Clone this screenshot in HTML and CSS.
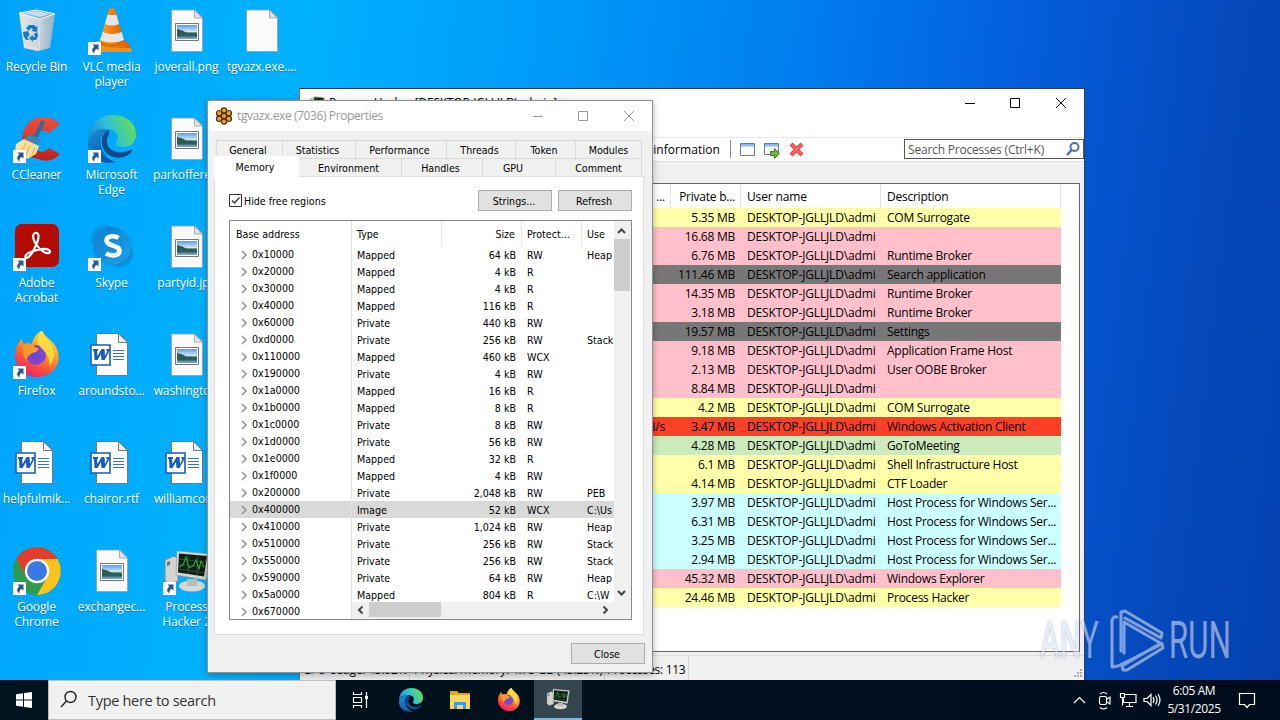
FILE: index.html
```html
<!DOCTYPE html>
<html lang="en">
<head>
<meta charset="utf-8">
<title>Desktop</title>
<link rel="stylesheet" href="styles.css">
</head>
<body>
<svg class="defs" width="0" height="0" aria-hidden="true">
  <defs>
    <linearGradient id="gBin" x1="0" x2="1"><stop offset="0" stop-color="#dfe8ee"/><stop offset=".55" stop-color="#c9d4db"/><stop offset="1" stop-color="#8fb0c6"/></linearGradient>
    <linearGradient id="gCone" x1="0" x2="1"><stop offset="0" stop-color="#ffa21f"/><stop offset=".5" stop-color="#f57f0c"/><stop offset="1" stop-color="#d65a00"/></linearGradient>
    <linearGradient id="gEdgeA" x1="0" y1=".6" x2="1" y2=".3"><stop offset="0" stop-color="#1b8fd8"/><stop offset=".45" stop-color="#2fc0d8"/><stop offset="1" stop-color="#68e04c"/></linearGradient>
    <linearGradient id="gEdgeB" x1="0" y1="0" x2=".6" y2="1"><stop offset="0" stop-color="#1a8fd9"/><stop offset="1" stop-color="#0c58a8"/></linearGradient>
    <linearGradient id="gSky" x1="0" y1="0" x2="0" y2="1"><stop offset="0" stop-color="#5b9bea"/><stop offset=".5" stop-color="#d8ecf8"/><stop offset=".55" stop-color="#3e7257"/><stop offset=".75" stop-color="#2c5c6e"/><stop offset="1" stop-color="#8cb6d6"/></linearGradient>
    <linearGradient id="gFox" x1=".8" y1="0" x2=".3" y2="1"><stop offset="0" stop-color="#fff04a"/><stop offset=".4" stop-color="#ffa226"/><stop offset=".7" stop-color="#ff5438"/><stop offset="1" stop-color="#e91e6e"/></linearGradient>
    <radialGradient id="gFoxIn"><stop offset="0" stop-color="#5b4bd8"/><stop offset="1" stop-color="#9040c8"/></radialGradient>
    <linearGradient id="gSkype" x1="0" y1="0" x2="1" y2="1"><stop offset="0" stop-color="#0f7fd0"/><stop offset=".5" stop-color="#1490dc"/><stop offset="1" stop-color="#18a4e8"/></linearGradient>
    <linearGradient id="gRed" x1="0" y1="0" x2="0" y2="1"><stop offset="0" stop-color="#f0503c"/><stop offset="1" stop-color="#c02018"/></linearGradient>
  </defs>
  <symbol id="shortcut" viewBox="0 0 13 13"><path fill="#fff" d="M0 0h13v13H0z"/><path fill="#2a5599" d="M4.500 2.500h6v6L8.500 6.700C7 8 6.200 9.300 6.300 11.300 3.200 9.500 3.800 6.500 6.300 4.500z"/></symbol>
  <symbol id="bin" viewBox="0 0 48 48"><path fill="url(#gBin)" d="M6 6l18-3 18 4-5 34-12 3-14-3z"/><path fill="#7eabcd" d="M6 6l18-3 18 4-15 5z"/><path fill="#c6dded" d="M10 6l14-2 13 3-10 3z"/><path fill="none" stroke="#f8fbfd" d="M6 6l21 6 15-5M6 6l18-3 18 4"/><path fill="none" stroke="#e6eef3" stroke-width=".6" d="M27 12l-1 31"/><path fill="#e8dfd8" opacity=".8" d="M11 37l14 4v3l-14-3z"/><path fill="#1a76c6" d="M13 21l3-3h5l2 2 1.500-1-.5 6-5.500-1 1.500-1.500-2-1.500-2.500 3zM10 25l5-1 2 5-1.500-.5-1 2.500 1.500 2h-3l-2.500-4zM21 27l3-2 1 4-2 4h-3v2l-4-4 4-3v2h2z"/></symbol>
  <symbol id="vlc" viewBox="0 0 48 48"><path fill="url(#gCone)" d="M9 34h30l5 10H4z"/><path fill="#f09018" d="M4 45h40l-1-4H5z"/><path fill="#d96b05" d="M12 37q12 6 24 0l-2-8H14z"/><path fill="url(#gCone)" d="M21 2q3-2 6 0l9 32q-12 7-24 0z"/><path fill="#e4e7ea" d="M19.500 8h9l2.500 9q-7 3-14 0zM14.600 25q9.500 4 19 0l2.400 8q-12 5-24 0z"/></symbol>
  <symbol id="cc" viewBox="0 0 48 48"><path fill="url(#gRed)" d="M47 9L36 18q-7-6-13 1-6 8 0 15 6 6 13-1l11 6Q38 49 25 44 9 41 9 24 11 5 27 2q13-1 20 7z"/><path stroke="#2c6ca4" stroke-width="4" d="M30 6L23 22"/><path fill="#3a86ba" d="M16 19l12 6-3 5-13-6z"/><path fill="#ffdf9c" d="M11 24l15 7-3 8-9 5-3-4-9-4 1-7z"/><path fill="none" stroke="#dba958" d="M13 28l-5 8M17 30l-4 10M22 32l-3 8"/></symbol>
  <symbol id="edge" viewBox="0 0 48 48"><path fill="url(#gEdgeA)" d="M0 23C1 8 12 0 25 0c14 0 23 9 23 19 0 9-6 13-13 13-6 0-8-2-7-4 5-7-1-15-10-14C8 13 2 19 0 23z"/><path fill="url(#gEdgeB)" d="M0 25c3-9 12-13 20-10-6 2-9 8-7 16 2 9 7 14 15 16C10 51-2 38 0 25z"/><path fill="#114a8b" d="M20 15c-9 5-8 19 1 25 8 5 18 3 23-4 1-1 0-2-1-1-13 6-26 0-24-11 1-4 4-6 1-9z"/></symbol>
  <symbol id="page" viewBox="0 0 48 48"><path fill="#fafafa" stroke="#9a9a9a" stroke-width=".8" d="M8.500 3h23l8 8v33.500h-31z"/><path fill="#e3e3e3" stroke="#9a9a9a" stroke-width=".8" d="M31.500 3v8h8z"/></symbol>
  <symbol id="image" viewBox="0 0 48 48"><use href="#page"/><path fill="#fff" stroke="#777" d="M12.500 16.500h23v17h-23z"/><path fill="url(#gSky)" d="M14 18h20v14H14z"/><path fill="#2d5b50" d="M14 22q6 1 10 4l10 1v1H14z"/></symbol>
  <symbol id="word" viewBox="0 0 48 48"><path fill="#fff" stroke="#777" d="M8.500 2.500h22l9 9v33h-31z"/><path fill="#eee" stroke="#777" d="M30.500 2.500v9h9z"/><path fill="#fff" stroke="#185abd" stroke-width="1.600" d="M3 14h19v20H3z"/><path fill="#185abd" d="M5 18h5v2H9l.5 5 4-7h3l.5 7 2.500-5h-1v-2h3v2l-5 9h-3l-.500-6-3.500 6h-3L6 20H5z"/><path stroke="#3e70b5" stroke-width="1.200" d="M25 19.500h11M25 22.500h11M25 25.500h11M25 28.500h11"/></symbol>
  <symbol id="acro" viewBox="0 0 48 48"><rect x="2" y="1" width="44" height="43" rx="7" fill="#b30b00"/><path fill="none" stroke="#fff" stroke-width="2.200" d="M22 10c4-1 5 4 1 12-3 7-6 12-9 13-3 0-2-4 4-6 7-3 15-4 18-2 3 3-1 4-5 2-5-3-10-9-11-15 0-2 1-4 2-4z"/></symbol>
  <symbol id="skype" viewBox="0 0 48 48"><circle cx="17" cy="16" r="14" fill="#0795e2"/><circle cx="31" cy="30" r="14" fill="#0b8ee0"/><circle cx="24" cy="23" r="19" fill="url(#gSkype)"/><path fill="none" stroke="#fff" stroke-width="4.600" d="M30.500 15c-5-3-12-2-12 2.500 0 6 13 4 13 10.500 0 5-8 5.500-13.500 2.500"/></symbol>
  <symbol id="firefox" viewBox="0 0 48 48"><path fill="url(#gFox)" d="M2 24C2 15 6 12 8 8l3 5c3-1 5-1 8 0 1-7 6-11 10-14 2 7 12 11 15 19 6 16-6 28-20 28C11 46 2 36 2 24z"/><circle cx="23" cy="24" r="10" fill="url(#gFoxIn)"/><path fill="#ff9a28" d="M11 13q6-2 11 3l4 2-3 3c-6 1-7 3-10 8-4-6-4-12-2-16z"/><path fill="#ffe447" opacity=".8" d="M29 0c1 9 11 10 12 23 0 6-3 10-5 12 2-11-7-16-11-22-1-5 1-9 4-13z"/></symbol>
  <symbol id="chrome" viewBox="0 0 48 48"><circle cx="24" cy="24" r="24" fill="#2f9b4c"/><path fill="#e33b2e" d="M3.500 11.500A24 24 0 0 1 44.500 12H24L13.600 30z"/><path fill="#fcc31e" d="M44.500 12A24 24 0 0 1 24 48l10.400-18L24 12z"/><circle cx="24" cy="24" r="12.200" fill="#fff"/><circle cx="24" cy="24" r="10" fill="#3a78e7"/></symbol>
  <symbol id="hacker" viewBox="0 0 48 48"><path fill="#d3d3cf" stroke="#888" d="M2 13l9-4 4 3v22l-8 3-5-3z"/><path fill="#777" d="M4 15l3-1v4l-3 1z"/><ellipse cx="29" cy="39" rx="13" ry="5.500" fill="#d8d8d3"/><path fill="#bcbcb6" d="M24 32h10v7H24z"/><path fill="#d8d8d2" stroke="#999" stroke-width=".6" d="M14 4l33 3-4 26-30-5z"/><path fill="#101e13" d="M16 6.500l28 2.500-3 20.500-26-4z"/><path fill="none" stroke="#315d38" stroke-width=".8" d="M16 12l27 3M16 17l26 3M16 22l26 4M25 7v20M35 8l-1 20"/><path fill="none" stroke="#2aa83a" stroke-width="1.100" d="M16 20l4-2 3-8 3 11 4-2 3-6 3 9 2-8 3 6"/></symbol>
  <symbol id="flower" viewBox="0 0 18 18"><g fill="#eda41c" stroke="#4a300a" stroke-width="1.200"><circle cx="9" cy="3.500" r="2.700"/><circle cx="13.800" cy="6.200" r="2.700"/><circle cx="13.800" cy="11.800" r="2.700"/><circle cx="9" cy="14.500" r="2.700"/><circle cx="4.200" cy="11.800" r="2.700"/><circle cx="4.200" cy="6.200" r="2.700"/><circle cx="9" cy="9" r="2.600"/></g></symbol>
</svg>

<main class="desktop">
  <div class="icons" id="icons"></div>

  <section class="window hacker">
    <header class="titlebar">
      <svg class="app-icon" width="16" height="16"><use href="#hacker"/></svg>
      <span class="title">Process Hacker [DESKTOP-JGLLJLD\admin]+</span>
      <svg class="controls" width="106" height="14" fill="none" stroke="#000"><path d="M1 7.500h10M46.500 2.500h9v9h-9zM92 2l10 10M102 2L92 12"/></svg>
    </header>
    <div class="menu"></div>
    <div class="toolbar">
      <span class="tool-label">System information</span>
      <svg class="tools" width="76" height="20" fill="none"><path stroke="#888" d="M.5 1v18"/><path fill="#fff" stroke="#557eb9" d="M10.500 4.500h14v12h-14z"/><path fill="#8db9ee" d="M11 5h13v2.500H11z"/><path fill="#fff" stroke="#557eb9" d="M34.500 4.500h14v11h-14z"/><path fill="#8db9ee" d="M35 5h13v2.500H35z"/><path fill="#70b53c" stroke="#3e7d1c" d="M40.500 12.500h4v-3l5 5-5 5v-3h-4z"/><path stroke="#d8393f" stroke-width="4" d="M61 5l11 11M72 5L61 16"/><path stroke="#f46b6d" stroke-width="2" d="M61.500 5.500l10 10M71.500 5.500l-10 10"/></svg>
      <div class="search"><span>Search Processes (Ctrl+K)</span>
        <svg width="14" height="14" fill="none" stroke="#4a72b8"><circle cx="8.500" cy="5" r="4" stroke-width="2"/><path stroke-width="2.500" d="M5.500 8L1 13"/></svg></div>
    </div>
    <div class="band"></div>
    <div class="proc-list">
      <div class="proc proc-head"><span>...</span><span>Private b...</span><span>User name</span><span>Description</span></div>
      <div id="procs"></div>
    </div>
    <footer class="status"><span>CPU Usage: 43.92%</span><span>Physical memory: 4.75 GB (43.23%)</span><span>Processes: 113</span>
      <svg width="10" height="10" fill="#aaa"><path d="M7 1h2v2H7zM4 4h2v2H4zM7 4h2v2H7zM1 7h2v2H1zM4 7h2v2H4zM7 7h2v2H7z"/></svg></footer>
  </section>

  <section class="window props">
    <header class="props-title">
      <svg width="18" height="18"><use href="#flower"/></svg>
      <span>tgvazx.exe (7036) Properties</span>
      <svg class="controls" width="106" height="14" fill="none" stroke="#999"><path d="M1 7.500h10M46.500 2.500h9v9h-9zM92 2l10 10M102 2L92 12"/></svg>
    </header>
    <nav class="tabs tabs-back"><span>General</span><span>Statistics</span><span>Performance</span><span>Threads</span><span>Token</span><span>Modules</span></nav>
    <nav class="tabs tabs-front"><span class="active">Memory</span><span>Environment</span><span>Handles</span><span>GPU</span><span>Comment</span></nav>
    <div class="panel">
      <div class="options">
        <svg width="13" height="13" fill="none" stroke="#333"><path fill="#fff" d="M.5.5h12v12H.5z"/><path stroke-width="1.300" d="M3 6.500l2.500 2.500L10.500 3.500"/></svg>
        <span class="check-label">Hide free regions</span>
        <span class="button">Strings...</span><span class="button">Refresh</span>
      </div>
      <div class="mem">
        <div class="addr"><div class="mem-head">Base address</div><div id="addrs"></div></div>
        <div class="detail">
          <div class="detail-main">
            <div class="detail-rows"><div class="mem-row mem-head"><span>Type</span><span>Size</span><span>Protect...</span><span>Use</span></div><div id="regions"></div></div>
            <div class="vscroll"><svg width="17" height="17" fill="none" stroke="#444" stroke-width="2"><path d="M4 12l3.500-3.500L11 12"/></svg><i></i><svg width="17" height="17" fill="none" stroke="#444" stroke-width="2"><path d="M4 6l3.500 3.500L11 6"/></svg></div>
          </div>
          <div class="hscroll"><svg width="17" height="17" fill="none" stroke="#444" stroke-width="2"><path d="M10.500 4.500L7 8l3.500 3.500"/></svg><i></i><svg width="17" height="17" fill="none" stroke="#444" stroke-width="2"><path d="M6.500 4.500L10 8l-3.500 3.500"/></svg></div>
        </div>
      </div>
    </div>
    <div class="actions"><span class="button">Close</span></div>
  </section>

  <svg class="watermark" width="204" height="70" fill="none">
    <g font-family="Roboto, sans-serif" font-weight="400" font-size="52">
      <text x="3" y="52" textLength="59" lengthAdjust="spacingAndGlyphs">ANY</text>
      <text x="132" y="52" textLength="62" lengthAdjust="spacingAndGlyphs">RUN</text>
    </g>
    <g stroke-width="3" stroke-linejoin="round" stroke-linecap="round"><path d="M80 11h-3l-2 3v47l6-1 44-22-38-22v31"/><path d="M84 45V6l4-1 37 22-1 5-36-20"/><path d="M125 38l1 4-36 22h-4l-1-4 39-23"/></g>
  </svg>
</main>

<footer class="taskbar">
  <div class="start"><svg width="16" height="16" fill="#fff"><path d="M0 2.200l7-1v6.300H0zM8 1l8-1v7.500H8zM0 8.500h7v6.300l-7-1zM8 8.500h8V16l-8-1z"/></svg></div>
  <div class="task-search"><svg width="20" height="20" fill="none" stroke="#222" stroke-width="1.400"><circle cx="11.500" cy="7" r="5.500"/><path d="M7.500 11L2 17"/></svg><span>Type here to search</span></div>
  <div class="task view"><svg width="20" height="20" fill="none" stroke="#fff" stroke-width="1.200"><path d="M2.500 2v2.500h8V2M2.500 7.500h8v5h-8zM2.500 18v-2.500h8V18M15.500 2v16"/><path fill="#fff" stroke="none" d="M14 6h3v3h-3z"/></svg></div>
  <div class="task"><svg width="24" height="24"><use href="#edge"/></svg></div>
  <div class="task"><svg width="22" height="20"><path fill="#e8a317" d="M1 1h7l2 2h11v4H1z"/><path fill="#ffd75e" d="M1 5h20v14H1z"/><path fill="#3a9be0" d="M5 12h12v7h-3v-4H8v4H5z"/></svg></div>
  <div class="task"><svg width="24" height="24"><use href="#firefox"/></svg></div>
  <div class="task active"><svg width="24" height="24"><use href="#hacker"/></svg></div>
  <div class="tray">
    <svg width="94" height="24" fill="none" stroke="#fff" stroke-width="1.200"><path d="M4 15l5.500-5.500L15 15"/><rect x="29.500" y="8.500" width="7" height="8" rx="1.500"/><path d="M37 11l3-2v7l-3-2M30 6q3.500-3 7 0M30 19.500q3.500 3 7 0"/><path d="M54 6.500h12v8H53.500v-4M59.500 15v3M56 18.500h7M50.500 5.500h4v4h-4zM52.500 9.500v8"/><path d="M74 10.500h3l4-4v11l-4-4h-3zM83 9q2 3 0 6M85.500 7.500q3 4.500 0 9M88 6q4 6 0 12"/></svg>
    <div class="clock"><span>6:05 AM</span><span>5/31/2025</span></div>
    <svg class="note" width="18" height="18" fill="none" stroke="#fff" stroke-width="1.200"><path d="M1.500 2.500h15v11h-5l-2.500 3-2.500-3h-5z"/></svg>
  </div>
</footer>
<script src="desktop.js"></script>
</body>
</html>
```
FILE: styles.css
```css
* { box-sizing: border-box; }
body { margin: 0; width: 1280px; height: 720px; overflow: hidden; display: flex; flex-direction: column; font: 12px/15px "Open Sans", "Noto Sans", sans-serif; color: #000; }
.defs { position: absolute; }
svg { display: block; flex: none; }
span { white-space: nowrap; }
.desktop { position: relative; height: 680px; overflow: hidden; background: linear-gradient(97deg, #00a3fb 0%, #00b2ff 22%, #009bf9 40%, #007cee 60%, #045ddb 76%, #0549bd 90%, #0441b0 100%); }

.icons { display: grid; grid-template-columns: repeat(4, 75px); grid-template-rows: repeat(6, 108px); grid-auto-flow: column; margin-left: -1px; }
.icon { display: flex; flex-direction: column; align-items: center; padding-top: 7px; color: #fff; text-align: center; }
.icon .art { position: relative; width: 48px; height: 51px; }
.icon .arrow { position: absolute; left: 0; top: 35px; }
.icon .label { line-height: 15px; letter-spacing: -.1px; padding-top: 1px; text-shadow: 0 1px 1px rgba(0, 50, 110, .45); }
.icon .label span { display: block; }

.window { position: absolute; overflow: hidden; display: flex; flex-direction: column; }
.hacker { left: 299px; top: 88px; width: 786px; height: 592px; background: #f0f0f0; border: 1px solid #25406a; border-bottom: 0; border-left-color: #777; letter-spacing: -.2px; }
.titlebar { height: 28px; background: #fff; display: flex; align-items: center; padding: 0 14px 0 9px; }
.titlebar .title { margin-left: 4px; }
.controls { margin-left: auto; }
.menu { height: 21px; background: #fff; border-bottom: 1px solid #e8e8e8; }
.toolbar { height: 23px; background: #fff; display: flex; align-items: center; }
.tool-label { width: 420px; text-align: right; letter-spacing: .05px; }
.tools { margin-left: 10px; }
.search { margin-left: auto; width: 180px; height: 20px; border: 1px solid #555; display: flex; align-items: center; justify-content: space-between; padding: 0 3px; color: #555; }
.band { height: 22px; border-top: 1px solid #ddd; }
.proc-list { margin: 0 4px 0 3px; height: 470px; background: #fff; border: 1px solid #666; overflow: hidden; }
.proc { display: grid; grid-template-columns: 367px 70px 140px 180px; width: 757px; height: 19px; line-height: 20px; letter-spacing: -.24px; }
.proc span { padding: 0 6px; overflow: hidden; }
.proc span:nth-child(3) { letter-spacing: -.15px; }
.proc span:nth-child(-n+2) { text-align: right; }
.proc-head { height: 24px; line-height: 25px; }
.proc-head span { border-right: 1px solid #e2e2e2; }
.proc-head span:nth-child(-n+2) { padding-right: 5px; }
.yellow { background: #ffffaa; }
.pink { background: #ffc0cb; }
.gray { background: #777; }
.red { background: #ff3f28; }
.green { background: #cceabb; }
.cyan { background: #ccffff; }
.status { flex: 1; margin-top: 3px; border-top: 1px solid #ddd; display: flex; align-items: flex-start; line-height: 28px; letter-spacing: -.2px; }
.status span { width: 110px; padding-left: 3px; border-right: 1px solid #d5d5d5; height: 24px; }
.status span:nth-child(2) { width: 195px; padding-left: 4px; }
.status span:nth-child(3) { width: 84px; padding-left: 2px; letter-spacing: -.3px; }
.status svg { margin: 12px 1px 0 auto; }

.props { left: 207px; top: 100px; width: 446px; height: 573px; background: #f0f0f0; border: 1px solid #8d9296; box-shadow: 0 2px 7px rgba(0, 0, 0, .3); font: 10.6px/17px "DejaVu Sans Condensed", "Noto Sans", sans-serif; }
.props-title { height: 30px; background: #fff; display: flex; align-items: center; padding: 0 14px 0 7px; font: 12px/16px "Open Sans", sans-serif; letter-spacing: -.4px; color: #999; }
.props-title span { margin-left: 4px; }
.tabs { display: grid; height: 18px; line-height: 19px; text-align: center; margin-left: 8px; width: 426px; }
.tabs span { border: 1px solid #d9d9d9; border-left-width: 0; border-bottom: 0; padding-right: 3px; }
.tabs span:last-child { padding-right: 0; }
.tabs-back { margin-top: 9px; grid-template-columns: 67px 73px 91px 69px 60px 66px; }
.tabs-back span:first-child { border-left-width: 1px; }
.tabs-front { grid-template-columns: 83px 103px 81px 73px 86px; }
.tabs-front span:nth-child(4) { padding-right: 12px; }
.tabs-front .active { margin: -2px 0 -1px -2px; background: #fff; border-color: #fff; z-index: 1; padding-right: 2px; line-height: 20px; }
.panel { margin-left: 6px; width: 430px; height: 459px; background: #fff; border: 1px solid #dcdcdc; padding: 13px 0 0 14px; }
.options { display: flex; height: 21px; align-items: center; width: 403px; }
.check-label { margin-left: 2px; flex: 1; line-height: 19px; padding-top: 1px; }
.button { width: 74px; height: 21px; background: #e1e1e1; border: 1px solid #adadad; text-align: center; line-height: 20px; padding-right: 2px; }
.button + .button { margin-left: 6px; }
.mem { margin-top: 9px; width: 403px; height: 400px; border: 1px solid #828790; display: flex; overflow: hidden; }
.addr { width: 122px; border-right: 1px solid #e2e2e2; height: 398px; overflow: hidden; }
.mem-head { height: 25px; line-height: 26px; padding-left: 6px; }
.addr-row { display: flex; height: 17px; align-items: center; padding-left: 11px; line-height: 19px; }
.addr-row svg { margin-right: 5px; }
.selected { background: #d9d9d9; }
.detail { flex: 1; display: flex; flex-direction: column; }
.detail-main { height: 381px; display: flex; overflow: hidden; }
.detail-rows { width: 262px; overflow: hidden; }
.mem-row { display: grid; grid-template-columns: 90px 80px 60px 32px; height: 17px; line-height: 18px; }
.mem-row span { padding-left: 5px; overflow: hidden; }
.mem-row span:nth-child(2) { text-align: right; padding-right: 6px; }
.mem-row.mem-head { height: 25px; line-height: 26px; padding: 0; }
.mem-head span { border-right: 1px solid #e5e5e5; }
.mem-head span:last-child { border: 0; }
.vscroll { width: 17px; background: #f0f0f0; display: flex; flex-direction: column; }
.vscroll i { height: 52px; margin: 1px 1px auto 0; background: #cdcdcd; }
.hscroll { height: 17px; background: #f0f0f0; display: flex; padding-right: 17px; }
.hscroll i { width: 72px; height: 15px; margin-right: auto; background: #cdcdcd; }
.actions { flex: 1; display: flex; justify-content: flex-end; align-items: flex-start; padding: 8px 7px; }
.watermark { position: absolute; left: 1037px; top: 606px; opacity: .58; filter: drop-shadow(0 0 1px rgba(70, 80, 110, .7)); }
.watermark text { fill: #d8e2f6; }
.watermark path { stroke: #d5e1f8; }

.taskbar { height: 40px; display: flex; background: linear-gradient(90deg, #00131e, #000c1c); color: #fff; }
.start { width: 48px; display: flex; align-items: center; justify-content: center; }
.task-search { width: 288px; background: #f1f1f1; border: 1px solid #bbb; color: #333; display: flex; align-items: center; padding-left: 10px; font-size: 14.500px; }
.task-search span { margin-left: 9px; letter-spacing: -.3px; }
.task { width: 48px; margin-right: 1px; display: flex; align-items: center; justify-content: center; }
.task.view { width: 50px; }
.task.active { background: #33454e; border-bottom: 2px solid #76b9ed; }
.tray { margin-left: auto; display: flex; align-items: center; padding-right: 24px; }
.clock { display: flex; flex-direction: column; align-items: center; width: 60px; line-height: 18px; letter-spacing: -.4px; }
.note { margin-left: 14px; }
```
FILE: desktop.js
```js
const icons = [
  ['bin', 'Recycle Bin'], ['cc', 'CCleaner', 1], ['acro', 'Adobe|Acrobat', 1], ['firefox', 'Firefox', 1], ['word', 'helpfulmik...'], ['chrome', 'Google|Chrome', 1],
  ['vlc', 'VLC media|player', 1], ['edge', 'Microsoft|Edge', 1], ['skype', 'Skype', 1], ['word', 'aroundsto...'], ['word', 'chairor.rtf'], ['image', 'exchangec...'],
  ['image', 'joverall.png'], ['image', 'parkoffere...'], ['image', 'partyid.jpg'], ['image', 'washingto...'], ['word', 'williamcor...'], ['hacker', 'Process|Hacker 2', 1],
  ['page', 'tgvazx.exe....']
];
document.getElementById('icons').innerHTML = icons.map(([id, label, link]) =>
  `<div class="icon"><div class="art"><svg width="48" height="48"><use href="#${id}"/></svg>${link ? '<svg class="arrow" width="13" height="13"><use href="#shortcut"/></svg>' : ''}</div><div class="label">${label.split('|').map(l => `<span>${l}</span>`).join('')}</div></div>`).join('');

const procs = [
  ['yellow', '5.35', 'COM Surrogate'], ['pink', '16.68', ''], ['pink', '6.76', 'Runtime Broker'], ['gray', '111.46', 'Search application'],
  ['pink', '14.35', 'Runtime Broker'], ['pink', '3.18', 'Runtime Broker'], ['gray', '19.57', 'Settings'], ['pink', '9.18', 'Application Frame Host'],
  ['pink', '2.13', 'User OOBE Broker'], ['pink', '8.84', ''], ['yellow', '4.2', 'COM Surrogate'], ['red', '3.47', 'Windows Activation Client', '1.2 kB/s'],
  ['green', '4.28', 'GoToMeeting'], ['yellow', '6.1', 'Shell Infrastructure Host'], ['yellow', '4.14', 'CTF Loader'],
  ['cyan', '3.97', 'Host Process for Windows Ser...'], ['cyan', '6.31', 'Host Process for Windows Ser...'], ['cyan', '3.25', 'Host Process for Windows Ser...'],
  ['cyan', '2.94', 'Host Process for Windows Ser...'], ['pink', '45.32', 'Windows Explorer'], ['yellow', '24.46', 'Process Hacker']
];
document.getElementById('procs').innerHTML = procs.map(([color, size, text, rate = '']) =>
  `<div class="proc ${color}"><span>${rate}</span><span>${size} MB</span><span>DESKTOP-JGLLJLD\\admi</span><span>${text}</span></div>`).join('');

const regions = [
  ['10000', 'Mapped', '64', 'RW', 'Heap'], ['20000', 'Mapped', '4', 'R', ''], ['30000', 'Mapped', '4', 'R', ''], ['40000', 'Mapped', '116', 'R', ''],
  ['60000', 'Private', '440', 'RW', ''], ['d0000', 'Private', '256', 'RW', 'Stack'], ['110000', 'Mapped', '460', 'WCX', ''], ['190000', 'Private', '4', 'RW', ''],
  ['1a0000', 'Mapped', '16', 'R', ''], ['1b0000', 'Mapped', '8', 'R', ''], ['1c0000', 'Private', '8', 'RW', ''], ['1d0000', 'Private', '56', 'RW', ''],
  ['1e0000', 'Mapped', '32', 'R', ''], ['1f0000', 'Mapped', '4', 'RW', ''], ['200000', 'Private', '2,048', 'RW', 'PEB'], ['400000', 'Image', '52', 'WCX', 'C:\\Us'],
  ['410000', 'Private', '1,024', 'RW', 'Heap'], ['510000', 'Private', '256', 'RW', 'Stack'], ['550000', 'Private', '256', 'RW', 'Stack'],
  ['590000', 'Private', '64', 'RW', 'Heap'], ['5a0000', 'Mapped', '804', 'R', 'C:\\W'], ['670000']
];
const state = r => r[0] === '400000' ? ' selected' : '';
document.getElementById('addrs').innerHTML = regions.map(r =>
  `<div class="addr-row${state(r)}"><svg width="6" height="10" fill="none" stroke="#999" stroke-width="1.700"><path d="M1 1l4 4-4 4"/></svg>0x${r[0]}</div>`).join('');
document.getElementById('regions').innerHTML = regions.filter(r => r.length > 1).map(r =>
  `<div class="mem-row${state(r)}"><span>${r[1]}</span><span>${r[2]} kB</span><span>${r[3]}</span><span>${r[4]}</span></div>`).join('');
```
